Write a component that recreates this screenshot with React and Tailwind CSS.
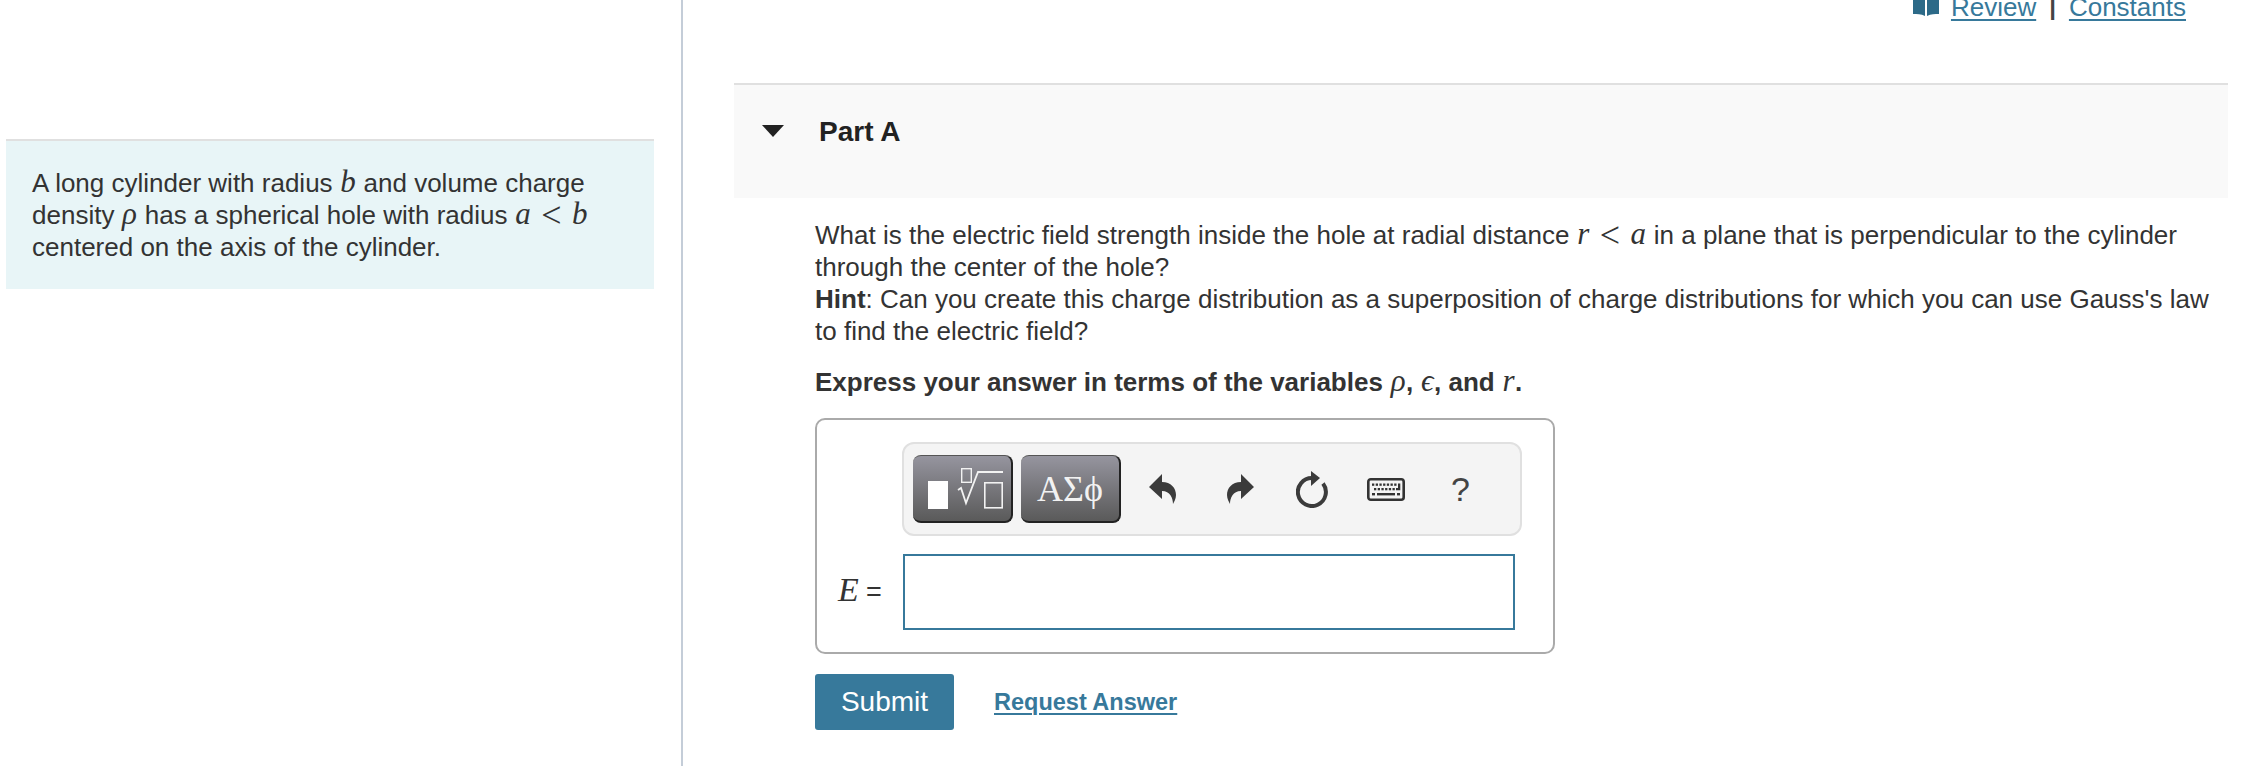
import React from 'react';

function M({ children }) {
  return <span className="font-['Liberation_Serif',serif] italic text-[31px] leading-[0] font-normal mx-[0.5px]">{children}</span>;
}

function Lt() {
  return <span className="font-['Liberation_Serif',serif] text-[36px] leading-[0] align-[-3px] font-normal mx-[10px]">&lt;</span>;
}

function MatrixIcon() {
  return (
    <svg width="75" height="41" viewBox="0 0 75 41" fill="none" className="ml-[6px]">
      <rect x="0" y="13" width="20" height="28" fill="#fff" />
      <rect x="33.7" y="0.7" width="9.6" height="13.6" stroke="#f2f2f2" strokeWidth="1.4" />
      <path d="M30 22 L33 20 L38 35 L50 4 H75" stroke="#f2f2f2" strokeWidth="1.8" />
      <rect x="56.8" y="14.8" width="17.4" height="25" stroke="#f2f2f2" strokeWidth="1.6" />
    </svg>
  );
}

function UndoIcon({ flip }) {
  return (
    <svg width="27" height="30" viewBox="0 0 27 30" className={flip ? '-scale-x-100' : ''}>
      <path d="M0 13 L13 0 V8 C22 8 27 14 27 21 C27 25 25 28 24 30 C24 24 21 17 13 17 V25 Z" fill="#3b3b3b" />
    </svg>
  );
}

function ResetIcon() {
  return (
    <svg width="33" height="37" viewBox="0 0 33 37" fill="none">
      <path d="M16 7 A14 14 0 1 0 27 12.5" stroke="#3b3b3b" strokeWidth="4" />
      <path d="M15 0 L24 7 L15 15 Z" fill="#3b3b3b" />
    </svg>
  );
}

function KeyboardIcon() {
  const keys = [];
  for (let i = 0; i < 7; i++) keys.push(<rect key={'a' + i} x={5 + i * 3.7} y="5.5" width="2.3" height="2.3" />);
  for (let i = 0; i < 6; i++) keys.push(<rect key={'b' + i} x={7 + i * 3.7} y="10" width="2.3" height="2.3" />);
  return (
    <svg width="38" height="23" viewBox="0 0 38 23" fill="#333">
      <rect x="1.3" y="1.3" width="35.4" height="20.4" rx="2.5" fill="#f4f4f4" stroke="#333" strokeWidth="2.6" />
      {keys}
      <path d="M31 5.5 H33.3 V12.3 H29 V10 H31 Z" />
      <rect x="5" y="15" width="3" height="2.4" />
      <rect x="10" y="15" width="18" height="2.4" />
      <rect x="30" y="15" width="3" height="2.4" />
    </svg>
  );
}

function BookIcon() {
  return (
    <svg width="26" height="24" viewBox="0 0 26 24">
      <path d="M0 0 H12 V24 C8 22 4 22 0 22 Z" fill="#2c6a88" />
      <path d="M14 0 H26 V22 C22 22 18 22 14 24 Z" fill="#2c6a88" />
    </svg>
  );
}

const toolButton = 'w-[100px] h-[68px] rounded-[8px] border-t border-t-[#555] border-b-2 border-r-2 border-b-[#222] border-r-[#222] bg-gradient-to-b from-[#96959f] to-[#5a5a5a] flex items-center justify-center';

export default function App() {
  return (
    <div className="h-[766px] overflow-hidden flex bg-white font-['Liberation_Sans',Arial,sans-serif] text-[26px] leading-[32px] text-[#333]">
      <div className="w-[683px] shrink-0 border-r-2 border-[#c4cdd8] pt-[139px] pl-[6px] pr-[27px]">
        <div className="h-[150px] bg-[#e8f5f7] border-t-2 border-[#e0e0e0] pt-[26px] pl-[26px] pr-[40px]">
          A long cylinder with radius <M>b</M> and volume charge density <M>ρ</M> has a spherical hole with radius <M>a</M><Lt /><M>b</M> centered on the axis of the cylinder.
        </div>
      </div>

      <div className="flex-1 min-w-0">
        <div className="h-[83px] flex justify-end pr-[68px] -mt-[9px] text-[#37799b]">
          <div className="flex items-start h-[32px]">
            <div className="mt-[1px] mr-[12px]"><BookIcon /></div>
            <a className="underline decoration-2 underline-offset-[3px]">Review</a>
            <span className="mx-[13px] text-[#444] text-[24px] font-bold">|</span>
            <a className="underline decoration-2 underline-offset-[3px]">Constants</a>
          </div>
        </div>

        <div className="ml-[51px] mr-[26px] h-[115px] bg-[#f9f9f9] border-t-2 border-[#e0e0e0] flex items-start pt-[31px] pl-[28px] mt-[9px]">
          <div className="w-0 h-0 mt-[9px] border-x-[11px] border-x-transparent border-t-[12px] border-t-[#222]" />
          <h2 className="ml-[35px] font-bold text-[28px] text-[#222]">Part A</h2>
        </div>

        <div className="pl-[132px] pr-[20px]">
          <p className="pt-[21px]">
            What is the electric field strength inside the hole at radial distance <M>r</M><Lt /><M>a</M> in a plane that is perpendicular to the cylinder through the center of the hole?
            <br />
            <b>Hint</b>: Can you create this charge distribution as a superposition of charge distributions for which you can use Gauss's law to find the electric field?
          </p>
          <p className="mt-[19px] font-bold">
            Express your answer in terms of the variables <M>ρ</M>, <M>ϵ</M>, and <M>r</M>.
          </p>

          <div className="mt-[20px] w-[740px] h-[236px] border-2 border-[#aaa] rounded-[10px] pt-[22px]">
            <div className="ml-[85px] w-[620px] h-[94px] rounded-[12px] bg-[#f4f4f4] border-2 border-[#e0e0e0] flex items-center pl-[9px]">
              <div className={toolButton}><MatrixIcon /></div>
              <div className={toolButton + ' ml-[8px] text-[#f2f2f2] font-["Liberation_Serif",serif] text-[36px]'}>ΑΣϕ</div>
              <div className="ml-[28px]"><UndoIcon /></div>
              <div className="ml-[51px]"><UndoIcon flip /></div>
              <div className="ml-[42px]"><ResetIcon /></div>
              <div className="ml-[38px]"><KeyboardIcon /></div>
              <div className="ml-[46px] text-[34px] text-[#444]">?</div>
            </div>
            <div className="mt-[18px] flex items-center pl-[21px]">
              <span className="w-[65px] whitespace-nowrap">
                <span className="font-['Liberation_Serif',serif] italic text-[34px] leading-[0]">E</span> <span className="text-[27px]">=</span>
              </span>
              <input className="w-[612px] h-[76px] border-2 border-[#37799b] bg-white outline-none" />
            </div>
          </div>

          <div className="mt-[20px] flex items-center">
            <button className="w-[139px] h-[56px] rounded-[3px] bg-[#37799b] text-white text-[28px]">Submit</button>
            <a className="ml-[40px] font-bold text-[23.5px] text-[#37799b] underline decoration-2 underline-offset-[3px]">Request Answer</a>
          </div>
        </div>
      </div>
    </div>
  );
}
